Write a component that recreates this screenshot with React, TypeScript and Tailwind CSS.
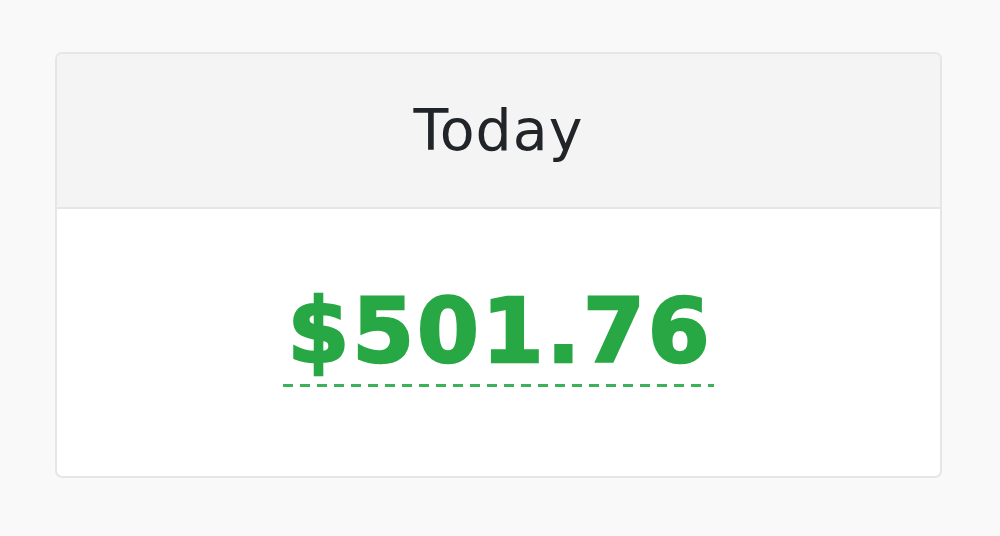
export default function App() {
  return (
    <div className="min-h-[536px] w-[1000px] bg-[#f9f9f9] pl-[55px] pt-[52px]" style={{ fontFamily: '"DejaVu Sans", Verdana, sans-serif' }}>
      <div className="flex h-[426px] w-[887px] flex-col overflow-hidden rounded-[7px] border-2 border-[#e6e6e6] bg-white">
        <div className="flex h-[155px] items-center justify-center border-b-2 border-[#e6e6e6] bg-[#f4f4f4]">
          <span className="text-[57px] leading-none tracking-[1px] text-[#212529]">Today</span>
        </div>
        <div className="flex flex-1 items-center justify-center pb-[12px]">
          <div className="flex flex-col">
            <span className="pl-[3px] text-[89px] font-bold leading-none tracking-[2.8px] text-[#28a745] [-webkit-text-stroke:2.5px_#28a745]">
              $501.76
            </span>
            <div className="-mx-[2px] mt-[8px] h-[3px] bg-[repeating-linear-gradient(90deg,#3cb05a_0_10px,transparent_10px_17px)]" />
          </div>
        </div>
      </div>
    </div>
  )
}
